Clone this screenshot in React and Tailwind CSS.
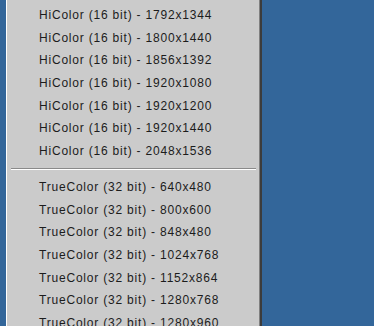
import React from 'react';

const hi = ['1792x1344', '1800x1440', '1856x1392', '1920x1080', '1920x1200', '1920x1440', '2048x1536'];
const tc = ['640x480', '800x600', '848x480', '1024x768', '1152x864', '1280x768', '1280x960'];

function Row({ label }) {
  return (
    <div className="h-[22.67px] flex items-center pl-[32px] text-[12px] tracking-[0.8px] leading-none text-[#1c1c1c] whitespace-nowrap">
      {label}
    </div>
  );
}

export default function App() {
  return (
    <div className="w-[374px] h-[326px] bg-[#33669a] overflow-hidden flex" style={{ fontFamily: '"Liberation Sans", Arial, sans-serif' }}>
      <div className="w-[6px] shrink-0" />
      <div className="w-[256px] h-full bg-[#cbcbcb] border-l border-white border-r-2 border-r-[#3c3c3c] shrink-0 pt-[3.67px] relative">
        <div className="absolute right-0 top-0 bottom-0 w-px bg-[#808080]" />
        {hi.map((r) => (
          <Row key={r} label={`HiColor (16 bit) - ${r}`} />
        ))}
        <div className="h-[13.33px] flex flex-col justify-center px-[4px]">
          <div className="h-px bg-[#8a8a8a]" />
          <div className="h-px bg-white" />
        </div>
        {tc.map((r) => (
          <Row key={r} label={`TrueColor (32 bit) - ${r}`} />
        ))}
      </div>
    </div>
  );
}
